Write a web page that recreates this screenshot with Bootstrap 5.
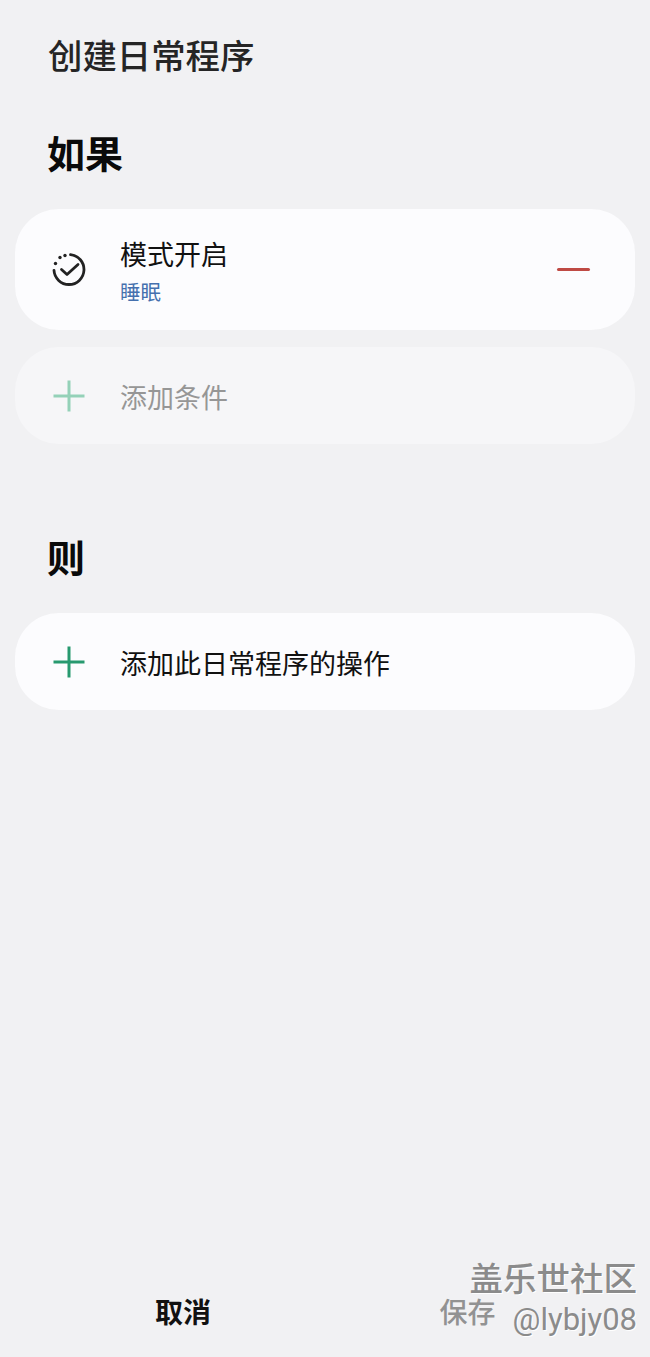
<!DOCTYPE html>
<html lang="zh">
<head>
  <meta charset="UTF-8" />
  <title>创建日常程序</title>
  <link href="https://cdn.jsdelivr.net/npm/bootstrap@5.3.0/dist/css/bootstrap.min.css" rel="stylesheet">
  <style>
    html, body { height: 100%; }
    body { background: #f1f1f3; font-family: "Noto Sans CJK SC", "Liberation Sans", sans-serif; color: #111; overflow: hidden; }
    .screen { height: 1357px; padding: 30px 15px 0; position: relative; }
    .page-title { font-size: 34.4px; line-height: 48px; font-weight: 500; color: #252525; margin-left: 33px; }
    .sect-title { font-size: 38px; line-height: 54px; font-weight: 700; color: #0a0a0a; margin: 0 0 0 32px; }
    .sect-if { margin-top: 47px; }
    .sect-then { margin-top: 85px; }
    .rule-card { background: #fcfcfe; border-radius: 44px; padding-left: 36px; }
    .card-tall { height: 121px; margin-top: 30px; }
    .card-add { height: 97px; }
    .card-off { background: #f6f6f8; margin-top: 17px; }
    .card-then { margin-top: 30px; }
    .rule-icon { width: 36px; height: 36px; flex: none; margin-right: 33px; }
    .rule-text { font-size: 27px; line-height: 38px; }
    .add-text { padding-top: 2px; }
    .rule-sub { font-size: 20.5px; line-height: 28px; color: #4570ae; margin-top: 4px; }
    .text-off { color: #969696; }
    .remove-bar { width: 33px; height: 3px; background: #bf4a44; border-radius: 2px; margin-left: auto; margin-right: 45px; }
    .bottom-bar { position: absolute; left: 0; right: 0; bottom: 30px; }
    .bottom-bar span { flex: 1 1 50%; text-align: center; font-size: 28px; line-height: 32px; }
    .btn-cancel { font-weight: 700; color: #111; padding-left: 41px; }
    .btn-save { font-weight: 500; color: #929292; padding-right: 40px; }
    .watermark { position: absolute; right: 13px; top: 1258px; text-align: right; color: #8b8b8b; text-shadow: 1px 1px 0 #fff; }
    .wm-name { font-size: 33.5px; line-height: 38px; font-weight: 500; }
    .wm-user { font-family: "Roboto", "Liberation Sans", sans-serif; font-size: 31px; line-height: 42px; margin-top: 3px; }
  </style>
</head>
<body>
  <div class="screen">
    <div class="page-title">创建日常程序</div>

    <!-- 如果 -->
    <div class="sect-title sect-if">如果</div>
    <div class="rule-card card-tall d-flex align-items-center">
      <svg class="rule-icon" viewBox="0 0 36 36" fill="none" stroke="#222" stroke-width="2.8" stroke-linecap="round" stroke-linejoin="round">
        <path d="M19.5 2.6 A15 15 0 1 1 3 18.3"/>
        <path d="M10.5 17.5 L16 22.5 L27 12.5"/>
        <circle cx="14" cy="3.5" r="1.7" fill="#222" stroke="none"/>
        <circle cx="9" cy="5.5" r="1.7" fill="#222" stroke="none"/>
        <circle cx="4.5" cy="11.5" r="1.7" fill="#222" stroke="none"/>
      </svg>
      <div>
        <div class="rule-text">模式开启</div>
        <div class="rule-sub">睡眠</div>
      </div>
      <div class="remove-bar"></div>
    </div>
    <div class="rule-card card-add card-off d-flex align-items-center">
      <svg class="rule-icon" viewBox="0 0 36 36" stroke="#94d1b8" stroke-width="3"><path d="M18 2.5V33.5M2.5 18H33.5"/></svg>
      <div class="rule-text add-text text-off">添加条件</div>
    </div>

    <!-- 则 -->
    <div class="sect-title sect-then">则</div>
    <div class="rule-card card-add card-then d-flex align-items-center">
      <svg class="rule-icon" viewBox="0 0 36 36" stroke="#27996f" stroke-width="3"><path d="M18 2.5V33.5M2.5 18H33.5"/></svg>
      <div class="rule-text add-text">添加此日常程序的操作</div>
    </div>

    <div class="bottom-bar d-flex">
      <span class="btn-cancel">取消</span>
      <span class="btn-save">保存</span>
    </div>
    <div class="watermark">
      <div class="wm-name">盖乐世社区</div>
      <div class="wm-user">@lybjy08</div>
    </div>
  </div>
  <script src="https://cdn.jsdelivr.net/npm/bootstrap@5.3.0/dist/js/bootstrap.bundle.min.js"></script>
</body>
</html>
